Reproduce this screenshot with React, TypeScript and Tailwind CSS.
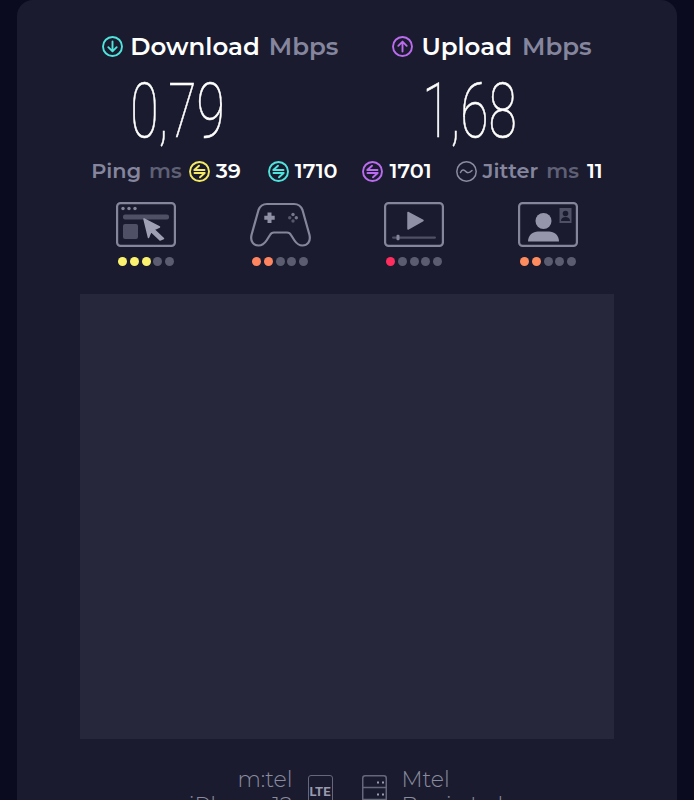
const sans = "font-['Montserrat','Inter','Noto_Sans',sans-serif]";

function ArrowCircle({ color, up }: { color: string; up?: boolean }) {
  return (
    <svg width="21" height="21" viewBox="0 0 21 21" fill="none" stroke={color} strokeWidth="1.9" strokeLinecap="round" strokeLinejoin="round">
      <circle cx="10.5" cy="10.5" r="9.500" />
      {up ? <path d="M10.5 15.5V5.8M6.300 9.800l4.200-4.200 4.200 4.200" /> : <path d="M10.5 5.5v9.700M6.300 11.200l4.200 4.200 4.200-4.200" />}
    </svg>
  );
}

function PingCircle({ color }: { color: string }) {
  return (
    <svg width="21" height="21" viewBox="0 0 21 21" fill="none" stroke={color} strokeWidth="1.9" strokeLinecap="round" strokeLinejoin="round">
      <circle cx="10.5" cy="10.5" r="9.500" />
      <path d="M5.300 9h10.200M10 4.700 5.300 9M5.500 12h10.200M15.700 12 11 16.300" />
    </svg>
  );
}

function JitterCircle() {
  return (
    <svg width="21" height="21" viewBox="0 0 21 21" fill="none" stroke="#8b8ca2" strokeWidth="1.5" strokeLinecap="round">
      <circle cx="10.5" cy="10.5" r="9.700" />
      <path d="M4.500 11.500c1.500-3 3.500-3 5-1.200s3.500 2 6.500-.8" />
    </svg>
  );
}

function BrowserIcon() {
  return (
    <svg width="60" height="45" viewBox="0 0 60 45" fill="none">
      <rect x="1.100" y="1.100" width="57.800" height="42.800" rx="3.500" stroke="#85869c" strokeWidth="2.200" />
      <circle cx="7" cy="6.500" r="1.700" fill="#85869c" />
      <circle cx="13" cy="6.500" r="1.700" fill="#85869c" />
      <circle cx="19" cy="6.500" r="1.700" fill="#85869c" />
      <rect x="7" y="12.500" width="46" height="5" rx="2" fill="#4f5065" />
      <rect x="7" y="22" width="15" height="15" rx="2" fill="#4f5065" />
      <path d="M28 17 43.500 25 38 27.500 47.500 36.500 44 38 35 29.500 32.500 35.500z" fill="#9fa0b4" stroke="#9fa0b4" strokeWidth="1.500" strokeLinejoin="round" />
    </svg>
  );
}

function GamepadIcon() {
  return (
    <svg width="61" height="45" viewBox="0 0 61 45" fill="none">
      <path d="M17 2H44C49 2 51 4 52.500 8L59.500 33C61 40 57 43.500 52.500 43.500C48.500 43.500 46.500 41.500 44.500 38.500L41 33C40 31 38.500 30.500 37 30.500H24C22.500 30.500 21 31 20 33L16.500 38.500C14.500 41.500 12.500 43.500 8.500 43.500C4 43.500 0 40 1.500 33L8.500 8C10 4 12 2 17 2Z" stroke="#85869c" strokeWidth="2.200" />
      <path d="M17.500 10.500h4v3.200h3.200v4h-3.200v3.200h-4v-3.200h-3.200v-4h3.200z" fill="#8f90a6" />
      <circle cx="43" cy="12.500" r="1.700" fill="#77788e" />
      <circle cx="43" cy="19" r="1.700" fill="#55566c" />
      <circle cx="39.700" cy="15.700" r="1.700" fill="#55566c" />
      <circle cx="46.300" cy="15.700" r="1.700" fill="#77788e" />
    </svg>
  );
}

function VideoIcon() {
  return (
    <svg width="60" height="45" viewBox="0 0 60 45" fill="none">
      <rect x="1.100" y="1.100" width="57.800" height="42.800" rx="3.500" stroke="#85869c" strokeWidth="2.200" />
      <path d="M24 10.500 39 18.500 24 27z" fill="#8f90a6" stroke="#8f90a6" strokeWidth="1.500" strokeLinejoin="round" />
      <rect x="8" y="34.500" width="44" height="2.200" rx="1.100" fill="#4f5065" />
      <rect x="12.500" y="32.800" width="3" height="5.500" rx="1" fill="#85869c" />
    </svg>
  );
}

function CallIcon() {
  return (
    <svg width="60" height="45" viewBox="0 0 60 45" fill="none">
      <rect x="1.100" y="1.100" width="57.800" height="42.800" rx="3.500" stroke="#85869c" strokeWidth="2.200" />
      <circle cx="25.500" cy="19" r="8" fill="#9596ab" />
      <path d="M10 39.500C10 33 15 29.500 20 29.500h11C36 29.500 41 33 41 39.500z" fill="#9596ab" />
      <rect x="41.500" y="6" width="12" height="15" fill="#4f5065" />
      <circle cx="47.500" cy="11.500" r="2.800" fill="#1a1b2e" />
      <path d="M43 19c0-3 2-4 4.500-4s4.500 1 4.500 4z" fill="#1a1b2e" />
    </svg>
  );
}

const QUALITY = [
  { icon: <BrowserIcon />, on: 3, color: 'bg-[#fbf36f]' },
  { icon: <GamepadIcon />, on: 2, color: 'bg-[#ff8560]' },
  { icon: <VideoIcon />, on: 1, color: 'bg-[#ff2d5e]' },
  { icon: <CallIcon />, on: 2, color: 'bg-[#ff8c5e]' },
];

function Dots({ on, color }: { on: number; color: string }) {
  return (
    <div className="flex gap-[2.750px]">
      {[0, 1, 2, 3, 4].map((i) => (
        <span key={i} className={`h-[9px] w-[9px] rounded-full ${i < on ? color : 'bg-[#5b5c70]'}`} />
      ))}
    </div>
  );
}

function BigNumber({ value, className }: { value: string; className: string }) {
  return (
    <div className={`flex h-[72px] w-[140px] items-center justify-center overflow-visible ${className}`}>
      <span className="origin-center scale-x-[0.68] font-['Roboto',sans-serif] text-[76px] leading-none font-thin whitespace-nowrap text-white [-webkit-text-stroke:0.6px_white]">
        {value}
      </span>
    </div>
  );
}

export default function App() {
  return (
    <div className={`h-[800px] overflow-hidden bg-[#0a0b1f] px-[17px] ${sans}`}>
      <div className="flex h-[900px] flex-col items-center rounded-t-2xl bg-[#1a1b2e]">
        {/* Speed headers */}
        <div className="mt-[30px] flex h-[32px] items-center gap-[54px] text-[24.500px] leading-none font-semibold">
          <div className="flex items-center">
            <ArrowCircle color="#4fe3dc" />
            <span className="ml-[7px] text-white">Download</span>
            <span className="ml-[9px] text-[#85869e]">Mbps</span>
          </div>
          <div className="flex items-center">
            <ArrowCircle color="#bb6bf0" up />
            <span className="ml-[8px] text-white">Upload</span>
            <span className="ml-[10px] text-[#85869e]">Mbps</span>
          </div>
        </div>

        <div className="mt-[13px] flex w-full">
          <BigNumber value="0,79" className="ml-[91px]" />
          <BigNumber value="1,68" className="ml-[152px]" />
        </div>

        {/* Ping row */}
        <div className="mt-[11px] flex h-[26px] items-center text-[20.800px] leading-none font-semibold">
          <span className="text-[#85869e]">Ping</span>
          <span className="ml-[8px] text-[#5f6075]">ms</span>
          <span className="ml-[7px]"><PingCircle color="#f5ea63" /></span>
          <span className="ml-[6px] text-white">39</span>
          <span className="ml-[27px]"><PingCircle color="#4fe3dc" /></span>
          <span className="ml-[6px] text-white">1710</span>
          <span className="ml-[24px]"><PingCircle color="#bb6bf0" /></span>
          <span className="ml-[7px] text-white">1701</span>
          <span className="ml-[24px]"><JitterCircle /></span>
          <span className="ml-[6px] text-[#85869e]">Jitter</span>
          <span className="ml-[8px] text-[#5f6075]">ms</span>
          <span className="ml-[8px] text-white">11</span>
        </div>

        {/* Quality icons */}
        <div className="mt-[18px] grid w-[536px] grid-cols-4">
          {QUALITY.map((q, i) => (
            <div key={i} className="flex flex-col items-center gap-[10px]">
              {q.icon}
              <Dots on={q.on} color={q.color} />
            </div>
          ))}
        </div>

        <div className="mt-[28px] h-[445px] w-[534px] bg-[#26273a]" />

        {/* Provider / server */}
        <div className="mt-[28px] flex items-start text-[22px] leading-[26px] font-light text-[#8a8b9f]">
          <div className="w-[200px] text-right">
            <div>m:tel</div>
            <div>iPhone 12</div>
          </div>
          <div className="mt-[8px] ml-[15px] flex h-[40px] w-[25px] justify-center rounded-[3px] border-[1.500px] border-[#66677d] pt-[8px] font-['Roboto',sans-serif] text-[13px] leading-[16px] font-bold text-[#9a9bae]">
            LTE
          </div>
          <svg className="mt-[8px] ml-[29px]" width="25" height="40" viewBox="0 0 25 40" fill="none" stroke="#66677d" strokeWidth="1.500">
            <rect x="0.750" y="0.750" width="23.500" height="38.500" rx="2.500" />
            <path d="M1 12.500h23M1 24.500h23" />
            <path d="M15 7.500h2M20 7.500h2M15 19.500h2M20 19.500h2" stroke="#9a9bae" strokeWidth="2" />
          </svg>
          <div className="ml-[15px] w-[200px]">
            <div>Mtel</div>
            <div>Banja Luka</div>
          </div>
        </div>
      </div>
    </div>
  );
}
